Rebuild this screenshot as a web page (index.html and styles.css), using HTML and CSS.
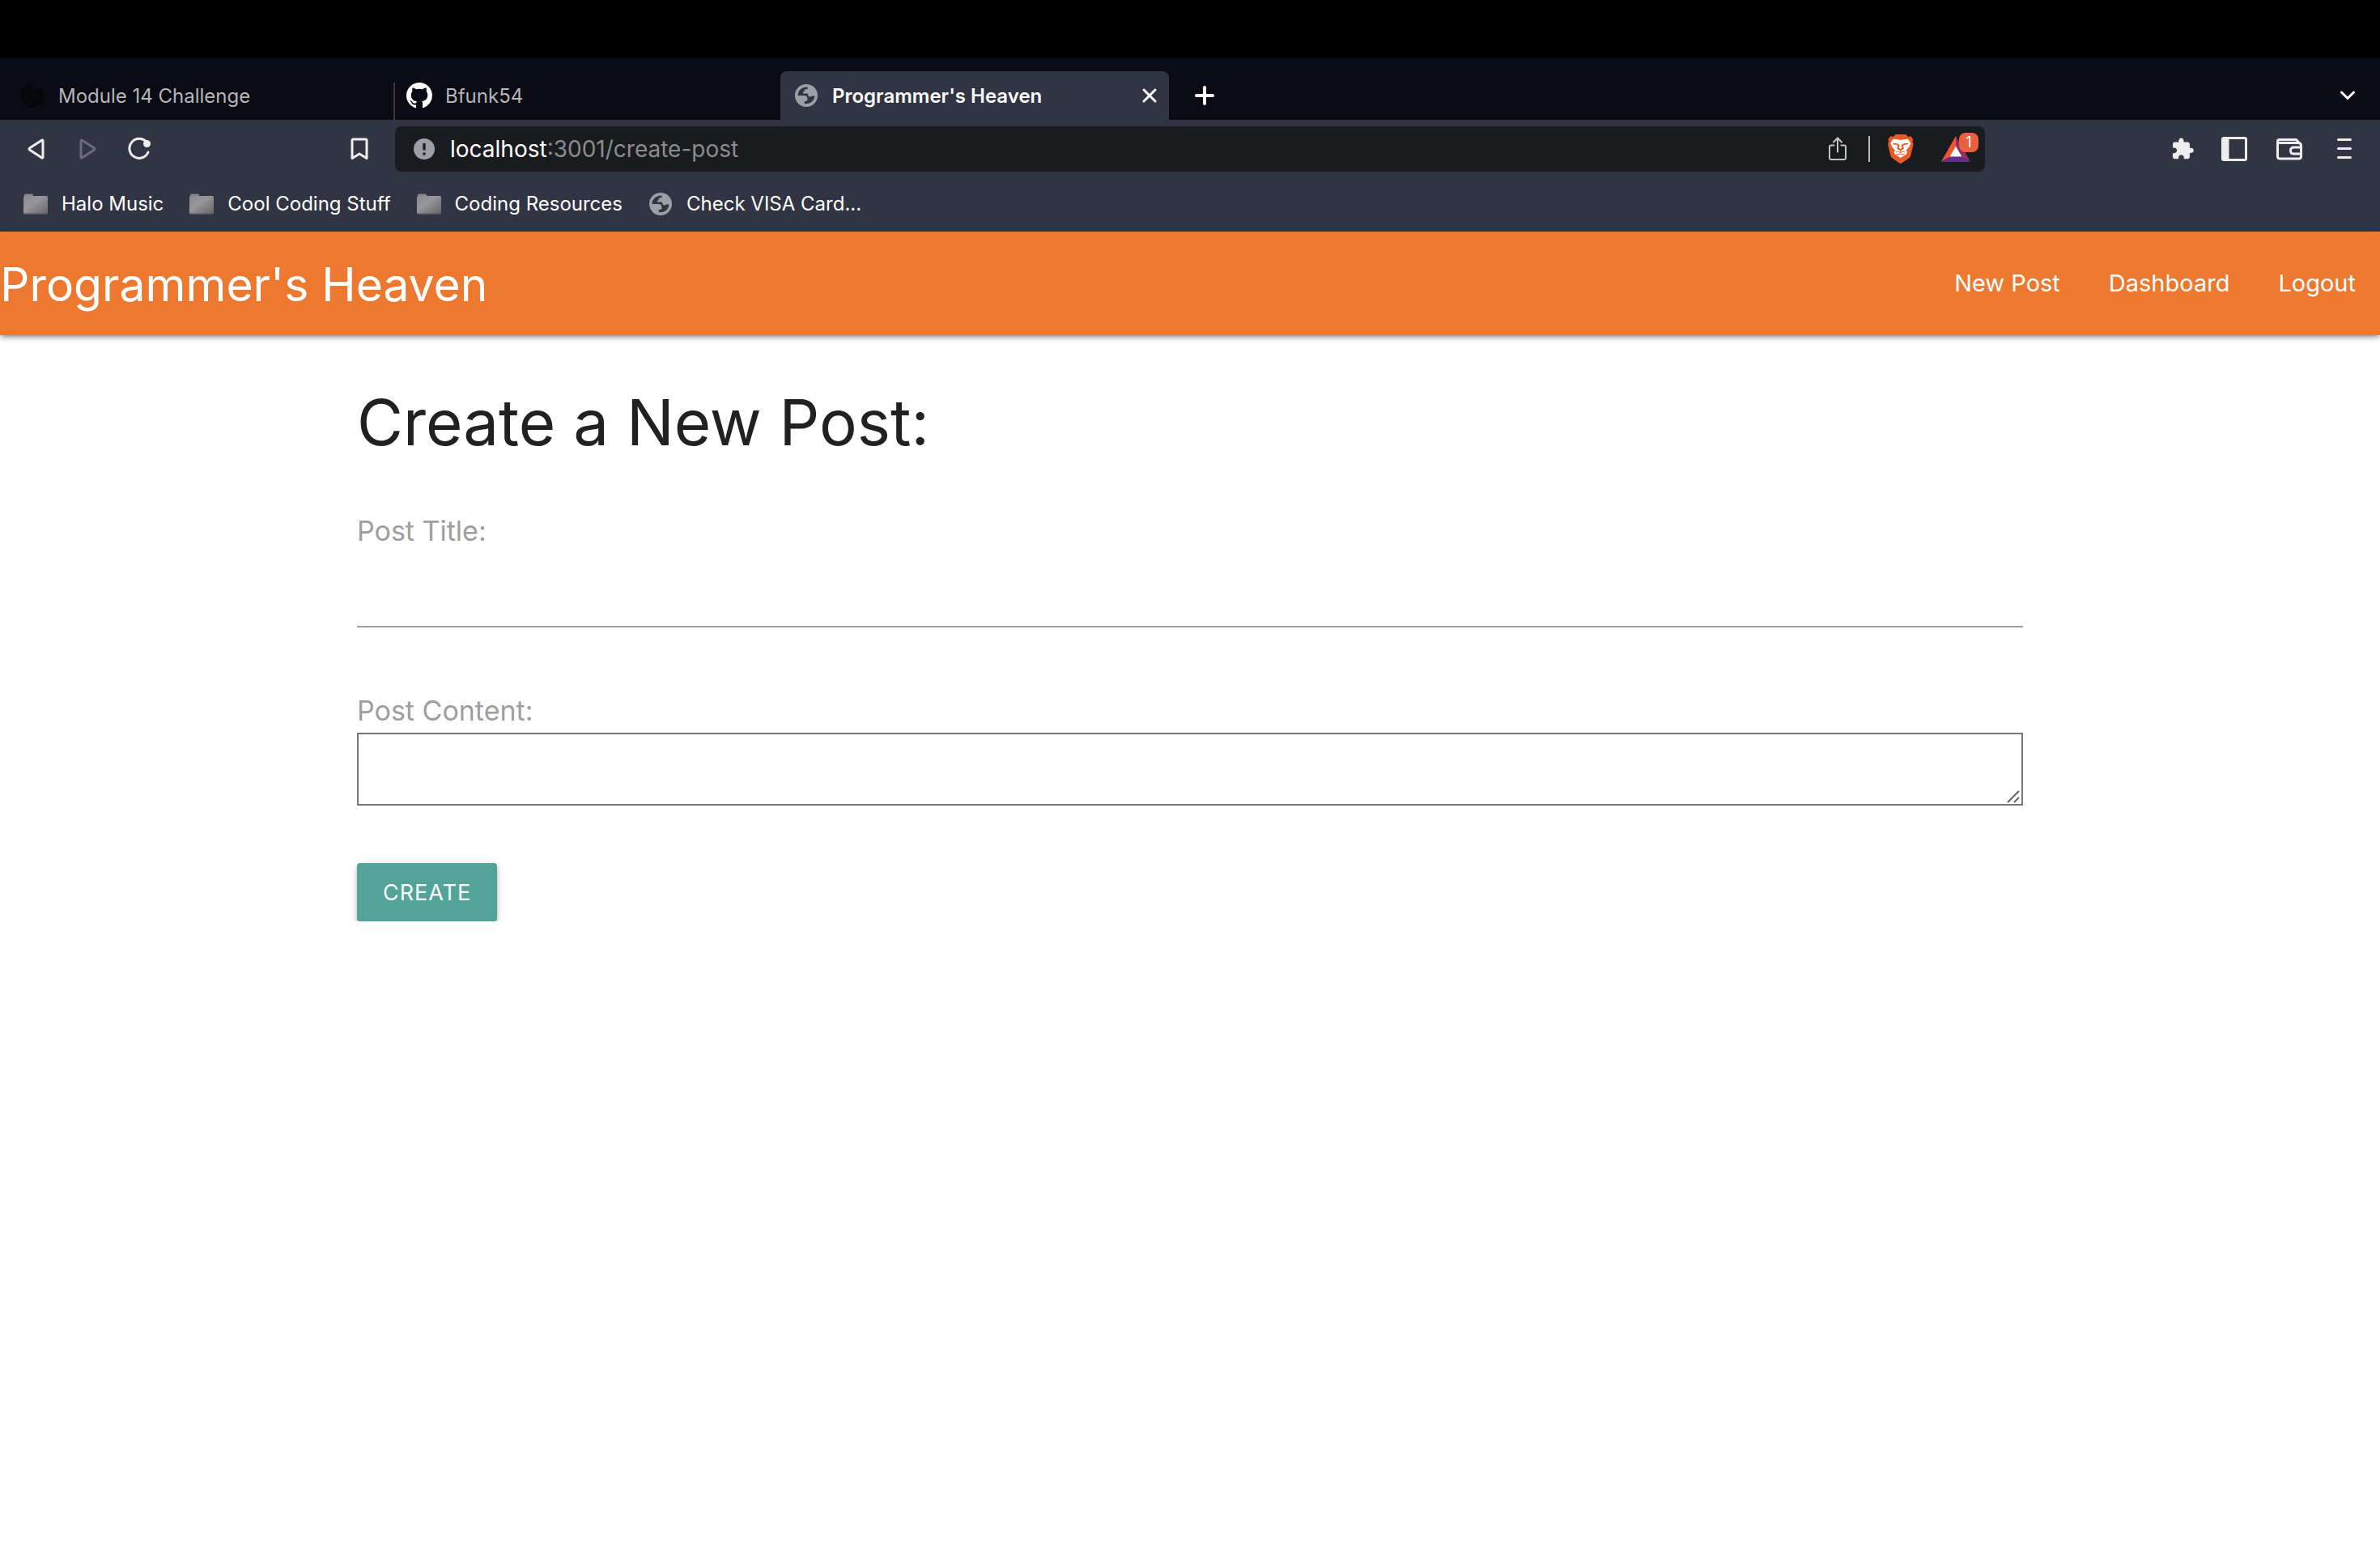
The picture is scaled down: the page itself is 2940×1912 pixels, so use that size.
FILE: index.html
```html
<!DOCTYPE html>
<html lang="en">
<head>
<meta charset="utf-8">
<title>Programmer's Heaven</title>
<link rel="stylesheet" href="styles.css">
</head>
<body>
<svg class="defs" aria-hidden="true">
  <symbol id="globe" viewBox="0 0 28 28">
    <circle cx="14" cy="14" r="14" fill="#9aa0a6"/>
    <path class="globe-sea" d="M3.6 14C3.4 8.200 8 3.600 15.600 3.500V6.300H13.200Q11.400 6.500 11.400 8.400V9.500H10V11.500H14.600Q16.400 11.600 16.400 13.400Q16.500 15.400 18.600 15.600Q20.500 15.700 21 14.600H24.500C24 20.500 19.300 24.700 11.800 24.200V21H13.600Q15.600 20.600 15.600 18.400Q15.500 14.200 11.600 14Z"/>
  </symbol>
  <symbol id="folder" viewBox="0 0 30 26">
    <path d="M1 4V2Q1 .5 2.500 .5H10.500Q12 .5 12 2V4Z" fill="#85858a"/>
    <rect y="3" width="30" height="22.500" rx="2" fill="url(#folder-fill)"/>
    <path d="M1 25H29" stroke="#595959"/>
  </symbol>
  <linearGradient id="folder-fill" x1="0" y1="0" x2="1" y2="1"><stop offset="0" stop-color="#8a8b91"/><stop offset=".4" stop-color="#96969c"/><stop offset="1" stop-color="#656565"/></linearGradient>
</svg>

<div class="menu-strip"></div>
<header class="browser">
  <div class="tabs">
    <a class="tab tab-first" href="#">
      <svg class="icon" viewBox="0 0 32 32"><path d="M18 1C8 0 2 7 2 15C2 25 8 31 15 31C21 31 24 28 25 24L29 29L30 16L27 9L22 7L17 10C14 8 15 4 18 1Z" fill="#050608"/><path d="M7 8Q7 18 16 24M11 6Q11 15 19 21M15 11Q17 16 24 17M5 17Q9 25 17 27" fill="none" stroke="#0c0c15" stroke-width="1.500"/></svg>
      <span>Module 14 Challenge</span>
    </a>
    <a class="tab" href="#">
      <svg class="icon" viewBox="0 0 16 16"><path fill="#fff" d="M8 0C3.580 0 0 3.580 0 8c0 3.540 2.290 6.530 5.470 7.590.4.070.55-.17.55-.38 0-.19-.01-.82-.01-1.490-2.010.37-2.530-.49-2.690-.94-.09-.23-.48-.94-.82-1.130-.28-.15-.68-.52-.01-.53.63-.01 1.080.58 1.230.82.72 1.210 1.870.87 2.330.66.07-.52.28-.87.51-1.070-1.780-.2-3.640-.89-3.640-3.950 0-.87.31-1.590.82-2.150-.08-.2-.36-1.020.08-2.120 0 0 .67-.21 2.200.82.64-.18 1.320-.27 2-.27s1.360.09 2 .27c1.530-1.040 2.200-.82 2.200-.82.44 1.100.16 1.920.08 2.120.51.56.82 1.270.82 2.150 0 3.070-1.870 3.750-3.650 3.950.29.25.54.73.54 1.480 0 1.070-.01 1.930-.01 2.200 0 .21.15.46.55.38A8.010 8.010 0 0 0 16 8c0-4.420-3.580-8-8-8Z"/></svg>
      <span>Bfunk54</span>
    </a>
    <div class="tab tab-active">
      <svg class="icon small"><use href="#globe"/></svg>
      <span>Programmer's Heaven</span>
      <button class="plain close" aria-label="Close tab"><svg class="icon" viewBox="0 0 32 32"><path class="line" d="M9 9L23 23M23 9L9 23"/></svg></button>
    </div>
    <button class="plain new-tab" aria-label="New tab"><svg class="icon" viewBox="0 0 32 32"><path class="line heavy" d="M16 6V26M6 16H26"/></svg></button>
    <button class="plain tab-search" aria-label="Search tabs"><svg class="icon" viewBox="0 0 32 32"><path class="line" d="M8.500 12L16 19.500L23.500 12"/></svg></button>
  </div>

  <div class="toolbar">
    <div class="history">
      <button class="plain" aria-label="Back"><svg class="icon" viewBox="0 0 32 32"><path class="line soft" d="M23.500 5.200L8.500 15Q7.500 16 8.500 17L23.500 26.800Q25 27.500 25 26V6Q25 4.500 23.500 5.200Z"/></svg></button>
      <button class="plain" aria-label="Forward"><svg class="icon dim" viewBox="0 0 32 32"><path class="line soft" d="M9.500 5.200L24.500 15Q25.500 16 24.500 17L9.500 26.800Q8 27.500 8 26V6Q8 4.500 9.500 5.200Z"/></svg></button>
      <button class="plain" aria-label="Reload"><svg class="icon" viewBox="0 0 32 32"><path class="line soft" d="M27 20A12 12 0 1 1 25 7.500"/><circle cx="25.500" cy="9.500" r="4.500" fill="#ededed"/></svg></button>
      <button class="plain bookmark" aria-label="Bookmark this page"><svg class="icon" viewBox="0 0 32 32"><path class="line soft" d="M8.500 4H23.500Q25 4 25 5.500V27.500L16 22L7 27.500V5.500Q7 4 8.500 4Z"/></svg></button>
    </div>
    <div class="address">
      <svg class="icon" viewBox="0 0 32 32"><circle cx="16" cy="16" r="13" fill="#9aa0a6"/><path d="M16 9V17.500M16 20.500V23.500" stroke="#1a1b1f" stroke-width="3.200"/></svg>
      <div class="url"><label for="url">localhost</label><input id="url" type="text" value=":3001/create-post"></div>
      <button class="plain" aria-label="Share"><svg class="icon share" viewBox="0 0 32 32"><path d="M11.500 11.500H8Q6 11.500 6 13.500V27Q6 29 8 29H24Q26 29 26 27V13.500Q26 11.500 24 11.500H20.500M16 19.500V3M11 7.500L16 2.500L21 7.500"/></svg></button>
      <span class="rule"></span>
      <button class="plain" aria-label="Brave Shields"><svg class="shield" viewBox="336 78 96 108">
        <path fill="#ea5a26" d="M365 78H402L411 87L421 85L430 97L427 104L431 113L421 156Q419 163 413 167L388 184Q383 187 378 184L354 167Q348 163 346 156L336 113L340 104L337 97L346 85L356 87Z"/>
        <path fill="#fff" d="M367 96L383 99L400 96L411 95L421 110L416 123L404 137L408 144Q407 152 396 157L383 165L371 157Q360 152 359 144L363 137L351 123L346 110L356 95Z"/>
        <path fill="#ea5a26" d="M354 110L371 112L380 117L377 128L383 132L389 128L386 117L395 112L413 110L411 115L397 117L393 120L396 131L383 139L370 131L373 120L369 117L356 115Z"/>
        <path fill="none" stroke="#ea5a26" stroke-width="3" d="M383 138V145M367 144L374 141L383 146L392 141L399 144M368 152L383 150L398 152"/>
      </svg></button>
      <button class="plain rewards" aria-label="Brave Rewards, 1 new"><svg class="bat" viewBox="0 0 36 32">
        <path d="M18 0L0 31.500L11 25.500L18 13Z" fill="#f0532d"/><path d="M18 0V13L25 25.500L36 31.500Z" fill="#9e2a63"/><path d="M0 32L11 25.500H25L36 32Z" fill="#662d91"/><path d="M18 12.500L25.500 25.500H10.500Z" fill="#fff"/>
      </svg><span class="badge">1</span></button>
    </div>
    <div class="actions">
      <button class="plain" aria-label="Extensions"><svg class="icon puzzle" viewBox="-2.500 -1 26 26"><path fill="#ededed" d="M22.500 11H21V7c0-1.100-.9-2-2-2h-4V3.500C15 2.120 13.880 1 12.500 1S10 2.120 10 3.500V5H6c-1.100 0-1.990.9-1.990 2v3.800H5.500c1.490 0 2.700 1.210 2.700 2.700s-1.210 2.700-2.700 2.700H4V20c0 1.100.9 2 2 2h3.800v-1.500c0-1.490 1.210-2.700 2.700-2.700s2.700 1.210 2.700 2.700V22H19c1.100 0 2-.9 2-2v-4h1.500c1.380 0 2.500-1.120 2.500-2.500S23.880 11 22.500 11z"/></svg></button>
      <button class="plain" aria-label="Sidebar"><svg class="icon" viewBox="0 0 32 32"><rect class="line soft" x="1.500" y="2.500" width="29" height="27" rx="1.500"/><path d="M1 2H9.500V30H1Z" fill="#ededed"/></svg></button>
      <button class="plain" aria-label="Wallet"><svg class="icon" viewBox="0 0 32 32"><path class="line soft" d="M1.500 8V25Q1.500 28 4.500 28H27.500Q30.500 28 30.500 25V12Q30.500 8.500 27 8.500H4Q1.500 8.500 1.500 6.500Q1.500 4.500 4 4.500H24.500L28 8.500M30.500 14H21.500Q17.500 14 17.500 18Q17.500 22 21.500 22H30.500"/></svg></button>
      <button class="plain" aria-label="Menu"><svg class="icon" viewBox="0 0 32 32"><path class="line soft" d="M8.500 4.500H23.500M8.500 15.500H23.500M8.500 26.500H23.500"/></svg></button>
    </div>
  </div>

  <nav class="bookmarks" aria-label="Bookmarks">
    <a href="#"><svg class="folder"><use href="#folder"/></svg>Halo Music</a>
    <a href="#"><svg class="folder"><use href="#folder"/></svg>Cool Coding Stuff</a>
    <a href="#"><svg class="folder"><use href="#folder"/></svg>Coding Resources</a>
    <a href="#"><svg class="folder globe"><use href="#globe"/></svg>Check VISA Card...</a>
  </nav>
</header>

<nav class="site-nav">
  <a class="brand" href="#">Programmer's Heaven</a>
  <div class="links">
    <a href="#">New Post</a>
    <a href="#">Dashboard</a>
    <a href="#">Logout</a>
  </div>
</nav>

<main class="container">
  <h1>Create a New Post:</h1>
  <form>
    <label class="field-label" for="title">Post Title:</label>
    <input class="title-input" id="title" type="text">
    <label class="field-label" for="content">Post Content:</label>
    <div class="content-box">
      <textarea id="content"></textarea>
      <svg class="grip" viewBox="0 0 16 16"><path d="M1 15L15 1M9 15L15 9"/></svg>
    </div>
    <button class="create" type="button">CREATE</button>
  </form>
</main>
</body>
</html>
```
FILE: styles.css
```css
* { box-sizing: border-box; }

body {
  margin: 0;
  background: #fff;
  color: #212121;
  font-family: Inter, "Liberation Sans", sans-serif;
  font-size: 29px;
}

a { color: inherit; text-decoration: none; }
svg { display: block; flex: none; }

.defs { position: absolute; width: 0; height: 0; }
.icon { width: 32px; height: 32px; }
.dim { opacity: .3; }
.line { fill: none; stroke: #fff; stroke-width: 3; stroke-linecap: round; stroke-linejoin: round; }
.soft { stroke: #ededed; }
.heavy { stroke-width: 4; }
.puzzle { overflow: visible; }
.globe-sea { fill: #313442; }

.plain {
  padding: 0;
  border: 0;
  background: none;
  font: inherit;
  color: inherit;
}

/* Browser chrome */
.menu-strip { height: 72px; background: #000; }
.browser { background: #313442; color: #fff; font-size: 24px; }

.tabs {
  display: flex;
  align-items: flex-end;
  height: 76px;
  padding: 0 24px 0 10px;
  background: #0b0b15;
}
.tab {
  display: flex;
  align-items: center;
  gap: 16px;
  width: 476px;
  height: 60px;
  padding: 0 14px;
  color: #b5b5b5;
}
.tab-first {
  width: 478px;
  background: linear-gradient(#3a3a3a, #3a3a3a) right bottom / 2px 46px no-repeat;
}
.tab-active {
  width: 480px;
  padding: 0 8px 0 16px;
  border-radius: 8px 8px 0 0;
  background: #313442;
  color: #fff;
  font-weight: 600;
}
.small { padding: 2px; }
.close { margin-left: auto; }
.new-tab { height: 60px; margin-left: 28px; }
.tab-search { height: 60px; margin-left: auto; }

.toolbar {
  display: flex;
  align-items: center;
  height: 72px;
  padding: 0 28px;
}
.history { display: flex; gap: 32px; width: 432px; margin-right: 28px; }
.bookmark { margin-left: auto; }
.address {
  display: flex;
  flex: 1;
  align-items: center;
  height: 56px;
  padding: 0 18px 0 20px;
  border-radius: 8px;
  background: #1a1b1f;
}
.url { display: flex; flex: 1; margin-left: 16px; font-size: 28px; line-height: 40px; }
.url input {
  flex: 1;
  min-width: 0;
  padding: 0;
  border: 0;
  background: none;
  color: #8b8c8f;
  font: inherit;
}
.share { fill: none; stroke: #c3c4c6; stroke-width: 2; stroke-linecap: round; }
.rule { width: 2px; height: 32px; margin: 0 22px; background: #b9babb; }
.shield { width: 32px; height: 36px; }
.rewards { position: relative; margin-left: 34px; }
.bat { width: 36px; height: 32px; }
.badge {
  position: absolute;
  top: -4px;
  right: -10px;
  width: 24px;
  height: 24px;
  border-radius: 8px;
  background: #eb6040;
  font-size: 18px;
  line-height: 24px;
  text-align: center;
}
.actions { display: flex; gap: 36px; margin-left: 224px; }

.bookmarks {
  display: flex;
  align-items: center;
  gap: 32px;
  height: 66px;
  padding: 0 29px 3px;
}
.bookmarks a { display: flex; align-items: center; gap: 17px; }
.folder { width: 30px; height: 26px; }
.globe { height: 28px; }

/* Site */
.site-nav {
  display: flex;
  align-items: center;
  justify-content: space-between;
  height: 128px;
  background: #ed7930;
  color: #fff;
  box-shadow: 0 4px 4px rgba(0, 0, 0, .14), 0 6px 2px -4px rgba(0, 0, 0, .12), 0 2px 10px rgba(0, 0, 0, .2);
}
.brand { padding-top: 4px; font-size: 57px; line-height: 124px; }
.links { display: flex; }
.links a { padding: 0 30px; line-height: 128px; }

.container { width: 70%; margin: 0 auto; }
h1 { margin: 60px 0 64px; font-size: 78px; font-weight: 400; line-height: 96px; }
.field-label { display: block; color: #9e9e9e; font-size: 34px; line-height: 44px; }
.title-input {
  display: block;
  width: 100%;
  height: 97px;
  margin-bottom: 81px;
  padding: 0;
  border: 0;
  border-bottom: 2px solid #9e9e9e;
  font: inherit;
}
.content-box { position: relative; margin: 5px 0 71px; }
textarea {
  display: block;
  width: 100%;
  height: 90px;
  padding: 4px;
  border: 2px solid #767676;
  background: none;
  font: inherit;
  resize: none;
}
.grip { position: absolute; right: 4px; bottom: 3px; width: 16px; height: 16px; fill: none; stroke: #626262; stroke-width: 2; }
.create {
  height: 72px;
  padding: 0 32px;
  border: 0;
  border-radius: 4px;
  background: #52a398;
  color: #fff;
  font: inherit;
  font-size: 27px;
  letter-spacing: 1px;
  box-shadow: 0 4px 4px rgba(0, 0, 0, .14), 0 6px 2px -4px rgba(0, 0, 0, .12), 0 2px 10px rgba(0, 0, 0, .2);
}
```
